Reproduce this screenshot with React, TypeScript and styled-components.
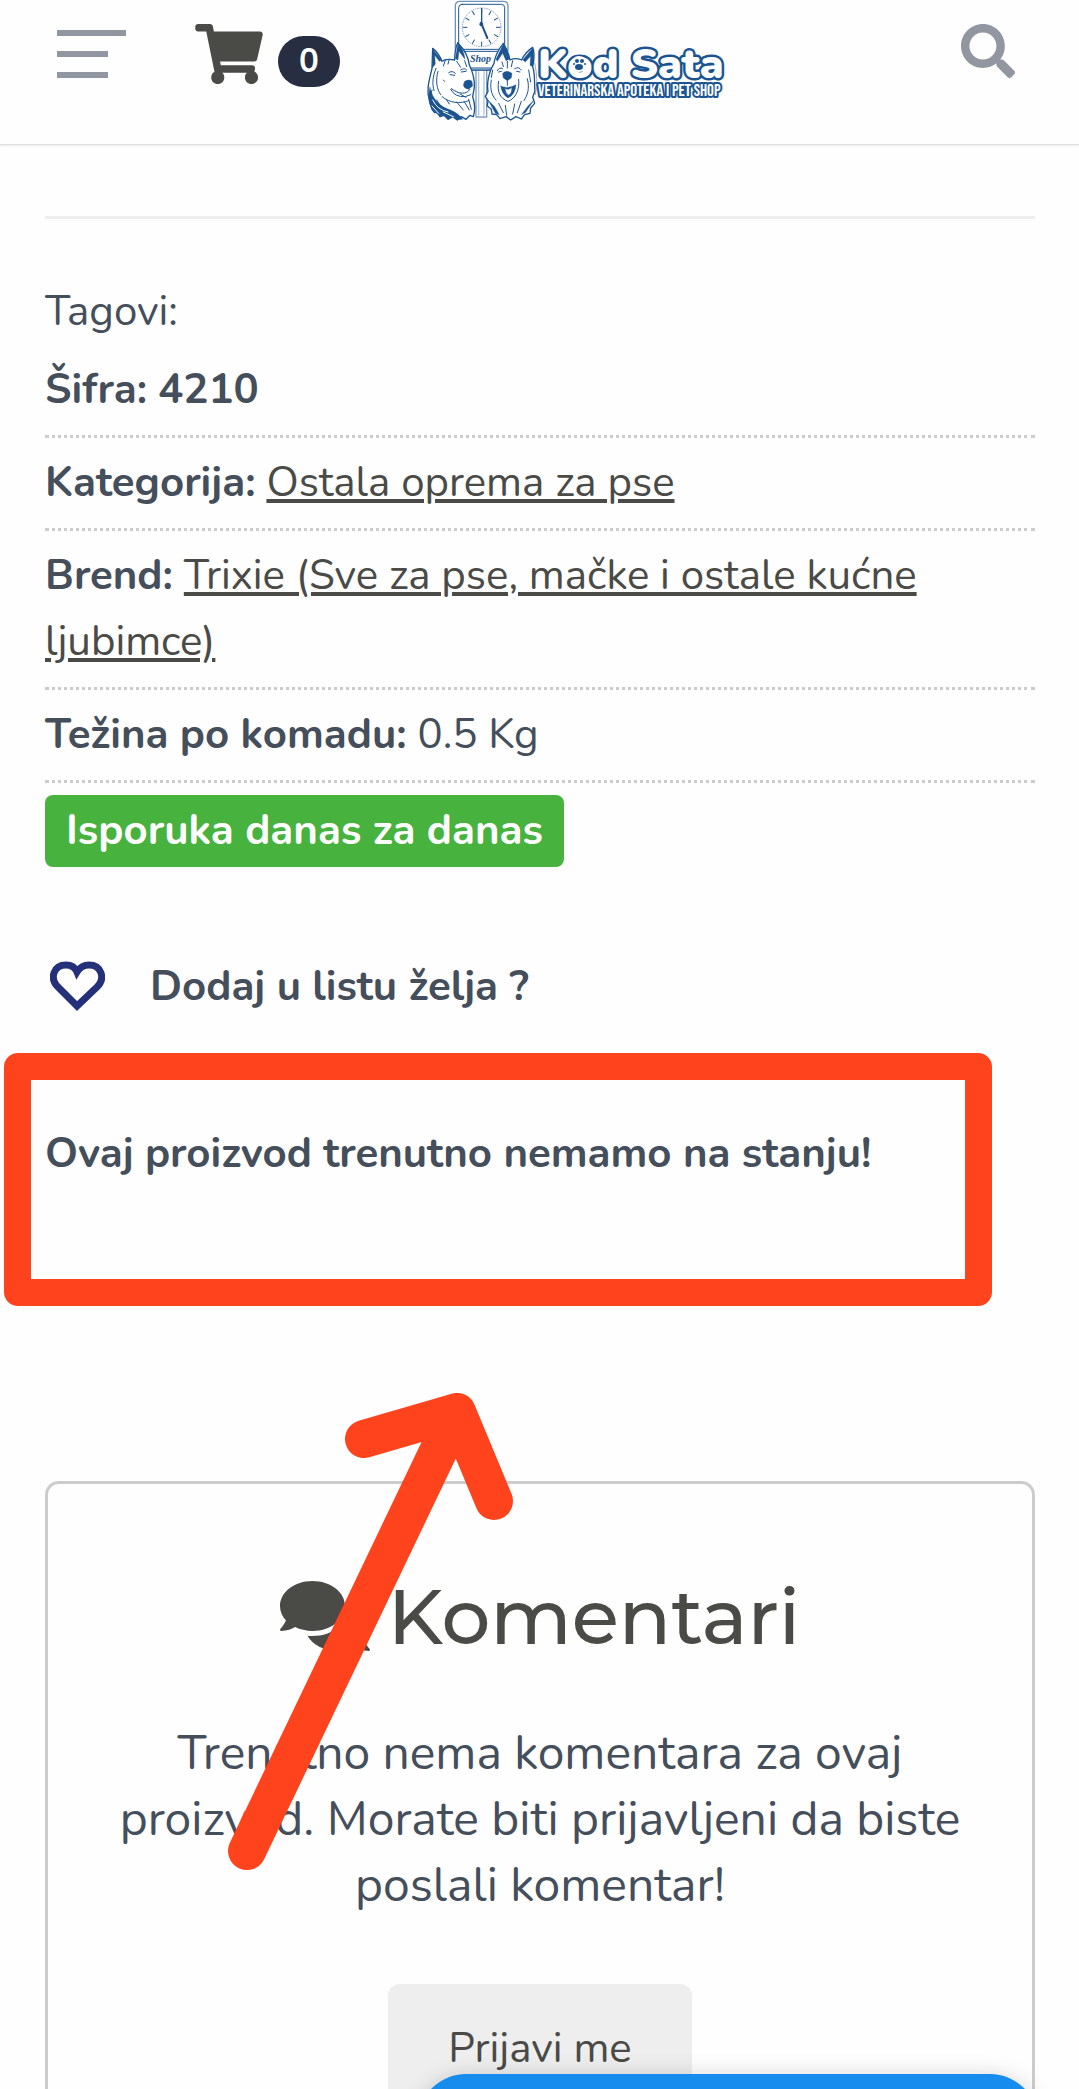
import React from "react";
import styled, { createGlobalStyle } from "styled-components";
import { FaComments, FaSearch, FaShoppingCart } from "react-icons/fa";

const color = {
  text: "#454e5b",
  dark: "#4a4a47",
  muted: "#9196a1",
  navy: "#272e42",
  line: "#cccccc",
  green: "#47b33e",
  mark: "#ff431c",
  logo: "#1b5490",
};

const GlobalStyle = createGlobalStyle`
  *, *::before, *::after { box-sizing: border-box; }
  body {
    margin: 0;
    background: #fefefe;
    color: ${color.text};
    font: 400 42px/66px Nunito, Lato, "Noto Sans", sans-serif;
  }
  p, h2, dl, dd { margin: 0; }
  button { border: 0; padding: 0; background: none; color: inherit; font: inherit; cursor: pointer; }
`;

const Page = styled.div`
  position: relative;
  height: 100vh;
  overflow: hidden;
`;

const Header = styled.header`
  display: flex;
  align-items: flex-start;
  height: 145px;
  padding: 0 64px 0 57px;
  border-bottom: 1px solid #dfdfdf;
  box-shadow: 0 1px 2px rgba(0, 0, 0, 0.08);
`;

const HeaderTools = styled.div`
  display: flex;
  align-items: center;
  height: 60px;
  margin-top: 24px;
`;

const MenuButton = styled.button`
  display: flex;
  flex-direction: column;
  gap: 15px;
  width: 69px;
  margin-right: 69px;
`;

const MenuBar = styled.span<{ $short?: boolean }>`
  height: 6px;
  width: ${(p) => (p.$short ? "51px" : "100%")};
  background: ${color.muted};
`;

const CartLink = styled.a`
  display: flex;
  align-items: center;
  gap: 15px;
  color: ${color.dark};
  text-decoration: none;
`;

const CartIcon = styled(FaShoppingCart)`
  width: 68px;
  height: 60px;
`;

const CartCount = styled.span`
  margin-top: 14px;
  padding: 0 21px;
  border-radius: 26px;
  background: ${color.navy};
  color: #fff;
  font-size: 33px;
  font-weight: 700;
  line-height: 51px;
`;

const LogoLink = styled.a`
  display: block;
  margin-left: 85px;
  line-height: 0;
`;

const SearchButton = styled.button`
  margin: 24px 0 0 auto;
  color: ${color.muted};
  line-height: 0;
`;

const Main = styled.main`
  padding: 0 44px 0 45px;
`;

const Divider = styled.hr`
  height: 3px;
  margin: 71px 0 60px;
  border: 0;
  background: #eeeeee;
`;

const DetailRow = styled.div`
  padding: 12px 0;
  border-bottom: 3px dotted ${color.line};

  dt, dd { display: inline; }
  dt { font-weight: 700; }
`;

const TextLink = styled.a`
  color: ${color.dark};
  text-decoration: underline;
  text-decoration-thickness: 4px;
  text-underline-offset: 3px;
`;

const DeliveryBadge = styled.p`
  width: fit-content;
  margin-top: 12px;
  padding: 3px 21px;
  border-radius: 8px;
  background: ${color.green};
  color: #fff;
  font-weight: 700;
`;

const WishButton = styled.button`
  display: flex;
  align-items: center;
  gap: 45px;
  margin-top: 87px;
  padding-left: 5px;
  font-weight: 700;
`;

const HeartIcon = styled.svg`
  margin-bottom: 2px;
`;

const StockNotice = styled.p`
  position: relative;
  margin-top: 101px;
  font-weight: 700;
`;

const Highlight = styled.span`
  position: absolute;
  top: -68px;
  left: -41px;
  width: 988px;
  height: 253px;
  border-radius: 14px;
  border: 27px solid ${color.mark};
`;

const Comments = styled.section`
  position: relative;
  display: flex;
  flex-direction: column;
  align-items: center;
  margin-top: 294px;
  padding: 92px 60px;
  border: 3px solid ${color.line};
  border-radius: 14px;
  text-align: center;
`;

const CommentsTitle = styled.h2`
  display: flex;
  align-items: center;
  gap: 18px;
  color: ${color.dark};
  font: 500 77px/80px Montserrat, Inter, sans-serif;
`;

const CommentsIcon = styled(FaComments)`
  width: 90px;
  height: 80px;
`;

const CommentsText = styled.p`
  margin-top: 64px;
  font-size: 48px;
`;

const LoginButton = styled.button`
  margin-top: 66px;
  padding: 32px 60px;
  border-radius: 12px;
  background: #eeeeee;
  color: ${color.dark};
`;

const Arrow = styled.svg`
  position: absolute;
  top: -91px;
  left: 179px;
`;

const ChatBar = styled.div`
  position: absolute;
  right: 41px;
  bottom: -81px;
  width: 620px;
  height: 96px;
  border-radius: 48px;
  background: #158cee;
  box-shadow: 0 4px 24px rgba(0, 0, 0, 0.2);
`;

const ticks = Array.from({ length: 12 }, (_, i) => i * 30);

function Logo() {
  return (
    <svg width="302" height="124" viewBox="0 0 302 124" role="img" aria-label="Kod Sata">
      <g
        transform="translate(-5 0) scale(.33333)"
        fill="none"
        stroke={color.logo}
        strokeWidth="4"
        strokeLinecap="round"
        strokeLinejoin="round"
      >
        <path fill="#fff" stroke="#7f9fc3" d="M168 205h32v146h-32z" />
        <path stroke="#b4c6dc" d="M176 215v130M192 215v130" />
        <path fill="#fff" stroke="#6f93bc" d="M106 150V18Q106 4 120 4h130q14 0 14 14v132l-30 58h-98z" />
        <rect x="116" y="13" width="138" height="135" rx="10" strokeWidth="3" />
        <path strokeWidth="3" d="M112 154h146M140 204h88M144 211h80" />
        <circle cx="185" cy="82" r="58" stroke="#7f9fc3" strokeWidth="3" strokeDasharray="2 5" />
        {ticks.map((a) => (
          <path key={a} d="M185 27v11" strokeWidth="3" transform={`rotate(${a} 185 82)`} />
        ))}
        <path d="M185 26v50" strokeWidth="4" />
        <path d="M183 68l19 46" strokeWidth="6" />
        <circle cx="184" cy="73" r="4" fill={color.logo} />

        <path
          fill="#fff"
          d="M38 145 36 205C28 240 18 270 28 300 34 320 30 325 44 338L52 334 60 350 72 346 84 358 98 350 112 360 124 350 138 358 150 346 160 350C166 330 165 310 158 290L163 262C164 240 158 215 148 195 145 165 130 145 113 128 106 145 104 165 104 180 85 176 74 178 66 184 58 165 48 152 38 145Z"
        />
        <path
          fill={color.logo}
          strokeWidth="1"
          d="M38 147 37 204 46 192 44 166 58 184 65 180ZM30 262C38 300 60 320 92 330 110 338 122 348 128 358L112 359 98 349 84 357 72 345 60 349 40 332C24 310 24 285 30 262ZM134 244q14-8 22 0l2 14-12 10q-14-2-16-12zM114 130l-8 46 8 4 3-26 18 24q-4-30-21-48z"
        />
        <path
          strokeWidth="3"
          d="M48 205C38 230 36 250 42 272M54 214C46 240 50 268 62 284M86 218q10-8 20 2M122 210q12-8 18 0M90 224l14 2M124 216l14-2M76 180l-6 18M88 178l-4 14M150 268C140 284 118 284 94 266M92 268q12 24 44 22l16-6M120 282l18 10M66 290C90 310 120 312 146 302M80 300l8 12M110 306l20 24M132 304l16 26M146 298l8 30M36 270l-6 24M70 240l4 4M110 184l12 18M134 182l6 18M60 320l24 16M50 300l14 22"
        />
        <path stroke="#fff" strokeWidth="3" d="M38 300Q52 330 84 336M36 318l20 22M70 336l30 14" />

        <path
          fill="#fff"
          d="M250 130C238 145 225 165 222 190 206 215 200 250 204 274L196 290 204 302 202 318 214 328 216 342 230 344 240 356 258 350 272 360 288 350 304 357 314 344 330 340 332 324 344 310 338 292 345 272C342 260 347 225 338 200 343 178 344 158 338 142 325 150 312 165 305 180 292 174 282 174 270 180 266 160 258 142 250 130Z"
        />
        <path
          fill={color.logo}
          strokeWidth="1"
          d="M250 132l-22 46 4 6 16-24 10 22 10-4q-4-28-18-46zM338 144l-30 36 8 6 16-18-2 28 8 4q6-30 0-56zM248 220q12-12 28 0l-2 14-12 8-12-8zM242 258q22 10 46-4-2 30-24 40-18-10-22-36zM204 300l22 40 12 4-14-24zM342 300l-26 38-12 6 20-26z"
        />
        <path
          fill="#fff"
          strokeWidth="2"
          d="M254 264q10 8 22-2 0 20-10 24-10-6-12-22z"
        />
        <path
          strokeWidth="3"
          d="M262 242v14M236 244C230 274 240 296 264 304 286 296 300 270 296 238M284 206q12-8 20 4M232 212q6-12 16-6M290 214l10 2M236 216l8-2M262 184v20M278 182l-4 18M246 186l4 14M214 240C208 270 218 290 228 300M322 236C330 266 322 286 312 302M236 310l14 28M256 316l4 30M284 312l-6 30M304 304l-12 34M326 210l6 36M218 210l-4 22"
        />
        <path strokeWidth="3" stroke="#8fabc9" d="M344 190q12 50 2 94" />
      </g>
      <text x="45" y="62" fill={color.logo} fontFamily="Liberation Serif, serif" fontWeight="700" fontStyle="italic" fontSize="10">
        Shop
      </text>
      <text
        x="113"
        y="96"
        fill="#fff"
        stroke={color.logo}
        strokeWidth="4"
        strokeLinejoin="round"
        paintOrder="stroke"
        fontFamily="Bebas Neue, Liberation Sans Narrow, Roboto Condensed, Liberation Sans, sans-serif"
        fontWeight="400"
        fontSize="17"
      >
        VETERINARSKA APOTEKA I PET SHOP
      </text>
      <text
        x="113"
        y="78"
        fill="#fff"
        stroke={color.logo}
        strokeWidth="5"
        strokeLinejoin="round"
        paintOrder="stroke"
        fontFamily="Nunito, Lato, sans-serif"
        fontWeight="900"
        fontSize="42"
      >
        Kod Sata
      </text>
      <g transform="translate(149 58)" fill={color.logo}>
        <circle cx="5" cy="6" r="8" fill="#fff" />
        <ellipse cx="5" cy="9" rx="4" ry="3" />
        <circle cx="0" cy="6" r="1" />
        <circle cx="3" cy="3" r="2" />
        <circle cx="8" cy="3" r="2" />
        <circle cx="11" cy="6" r="1" />
      </g>
    </svg>
  );
}

function Heart() {
  return (
    <HeartIcon width="55" height="51" viewBox="0 0 55 51" fill="none" stroke="#24307a" strokeWidth="7" aria-hidden="true">
      <path d="M27 45 8 26C-1 17 4 4 16 4 21 4 25 6 27 11 30 6 34 4 39 4 51 4 56 17 47 26Z" />
    </HeartIcon>
  );
}

export default function App() {
  return (
    <Page>
      <GlobalStyle />
      <Header>
        <HeaderTools>
          <MenuButton aria-label="Meni">
            <MenuBar />
            <MenuBar $short />
            <MenuBar $short />
          </MenuButton>
          <CartLink href="#korpa">
            <CartIcon />
            <CartCount>0</CartCount>
          </CartLink>
        </HeaderTools>
        <LogoLink href="#pocetna">
          <Logo />
        </LogoLink>
        <SearchButton aria-label="Pretraga">
          <FaSearch size={54} />
        </SearchButton>
      </Header>

      <Main>
        <Divider />
        <p>Tagovi:</p>
        <dl>
          <DetailRow>
            <dt>Šifra:</dt> <dd><strong>4210</strong></dd>
          </DetailRow>
          <DetailRow>
            <dt>Kategorija:</dt>{" "}
            <dd><TextLink href="#kategorija">Ostala oprema za pse</TextLink></dd>
          </DetailRow>
          <DetailRow>
            <dt>Brend:</dt>{" "}
            <dd><TextLink href="#brend">Trixie (Sve za pse, mačke i ostale kućne ljubimce)</TextLink></dd>
          </DetailRow>
          <DetailRow>
            <dt>Težina po komadu:</dt> <dd>0.5 Kg</dd>
          </DetailRow>
        </dl>
        <DeliveryBadge>Isporuka danas za danas</DeliveryBadge>
        <WishButton>
          <Heart />
          Dodaj u listu želja ?
        </WishButton>
        <StockNotice>
          Ovaj proizvod trenutno nemamo na stanju!
          <Highlight />
        </StockNotice>

        <Comments>
          <CommentsTitle>
            <CommentsIcon />
            Komentari
          </CommentsTitle>
          <CommentsText>
            Trenutno nema komentara za ovaj proizvod. Morate biti prijavljeni da biste poslali komentar!
          </CommentsText>
          <LoginButton>Prijavi me</LoginButton>
          <Arrow
            width="290"
            height="482"
            viewBox="0 0 290 482"
            fill="none"
            stroke={color.mark}
            strokeWidth="38"
            strokeLinecap="round"
            strokeLinejoin="round"
            aria-hidden="true"
          >
            <path d="M20 458 230 19M137 46 230 19 267 108" />
          </Arrow>
        </Comments>
      </Main>
      <ChatBar />
    </Page>
  );
}
